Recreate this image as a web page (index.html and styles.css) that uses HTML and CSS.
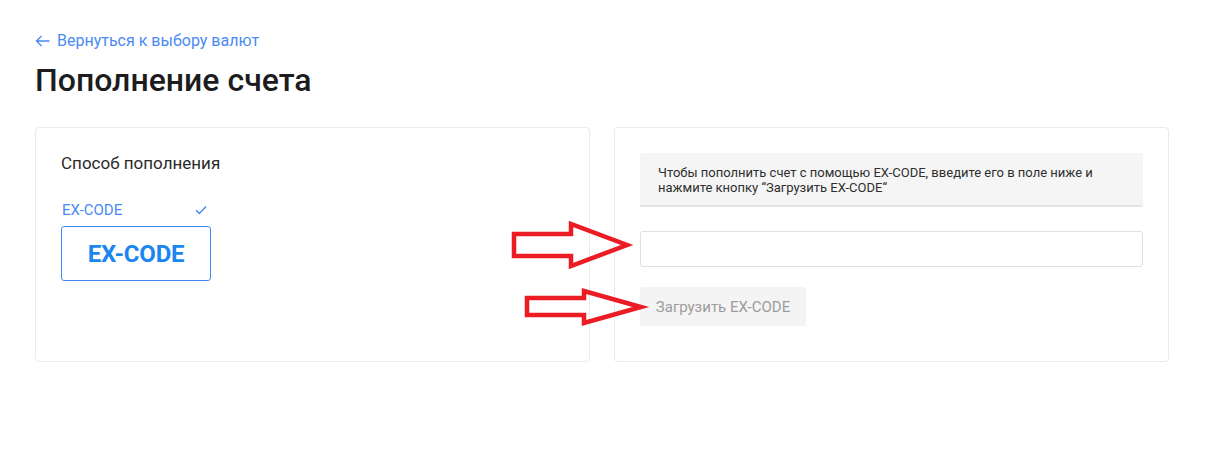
FILE: index.html
```html
<!DOCTYPE html>
<html lang="ru">
<head>
<meta charset="utf-8">
<title>Пополнение счета</title>
<link rel="stylesheet" href="styles.css">
</head>
<body>
<div class="page">
  <a class="back" href="#">
    <svg class="back-icon" width="15" height="12" viewBox="0 0 15 12"><path d="M14.5 6H1.5M6.5 1L1.5 6L6.5 11" fill="none" stroke="#4a8af4" stroke-width="1.3"/></svg>
    <span>Вернуться к выбору валют</span>
  </a>
  <h1 class="title">Пополнение счета</h1>
  <div class="cards">
    <section class="card">
      <div class="card-title">Способ пополнения</div>
      <div class="method">
        <div class="method-label">
          <span>EX-CODE</span>
          <svg width="12" height="10" viewBox="0 0 12 10"><path d="M1 5.2L4.3 8.4L11 1.5" fill="none" stroke="#4a8af4" stroke-width="1.5"/></svg>
        </div>
        <div class="method-box">EX-CODE</div>
      </div>
    </section>
    <section class="card">
      <div class="info">Чтобы пополнить счет с помощью EX-CODE, введите его в поле ниже и<br>нажмите кнопку “Загрузить EX-CODE“</div>
      <input class="code-input" type="text">
      <button class="load-btn" type="button">Загрузить EX-CODE</button>
    </section>
  </div>
  <svg class="arrows" width="1224" height="454" viewBox="0 0 1224 454">
    <polygon points="514,234 571,234 571,224 627,245 571,266 571,256 514,256" fill="none" stroke="#ec1c24" stroke-width="4.5"/>
    <polygon points="527,298 584,298 584,291 641,307 584,323 584,315 527,315" fill="none" stroke="#ec1c24" stroke-width="4.5"/>
  </svg>
</div>
</body>
</html>
```

FILE: styles.css
```css
* { box-sizing: border-box; }
html, body { margin: 0; padding: 0; background: #fff; }
body { font-family: Roboto, "Noto Sans", "Liberation Sans", sans-serif; color: #222; }
.page { position: relative; padding: 31px 0 0 35px; width: 1224px; height: 454px; }
.back { display: flex; align-items: center; gap: 7px; height: 20px; color: #4a8af4; text-decoration: none; font-size: 16px; line-height: 20px; }
.back-icon { display: block; }
.title { margin: 11px 0 0 0; font-size: 32px; line-height: 36px; font-weight: 500; color: #1c1c1e; letter-spacing: 0; }
.cards { display: flex; gap: 24px; margin-top: 29px; }
.card { width: 555px; height: 235px; border: 1px solid #e9eaee; border-radius: 4px; padding: 25px 25px; background: #fff; }
.card-title { font-size: 17px; line-height: 20px; color: #2a2a2a; }
.method { width: 150px; margin-top: 28px; }
.method-label { display: flex; justify-content: space-between; align-items: center; height: 18px; padding: 0 4px 0 1px; font-size: 15px; line-height: 18px; color: #4a8af4; }
.method-box { margin-top: 7px; height: 55px; border: 1px solid #3d8bf2; border-radius: 3px; display: flex; align-items: center; justify-content: center; font-size: 24px; font-weight: 700; color: #1c86ef; letter-spacing: -0.2px; }
.info { background: #f5f5f5; border-bottom: 2px solid #e1e4e9; border-radius: 2px; padding: 12px 18px 10px; font-size: 13px; line-height: 15px; color: #2e2e2e; }
.code-input { display: block; width: 100%; height: 36px; margin-top: 24px; border: 1px solid #dcdfe6; border-radius: 3px; background: #fff; outline: none; padding: 0 12px; font: inherit; }
.load-btn { display: block; margin-top: 20px; width: 166px; height: 39px; border: 0; border-radius: 2px; background: #f4f4f5; color: #9c9c9c; font-family: inherit; font-size: 15px; padding: 0; text-align: center; }
.arrows { position: absolute; left: 0; top: 0; pointer-events: none; }
```
